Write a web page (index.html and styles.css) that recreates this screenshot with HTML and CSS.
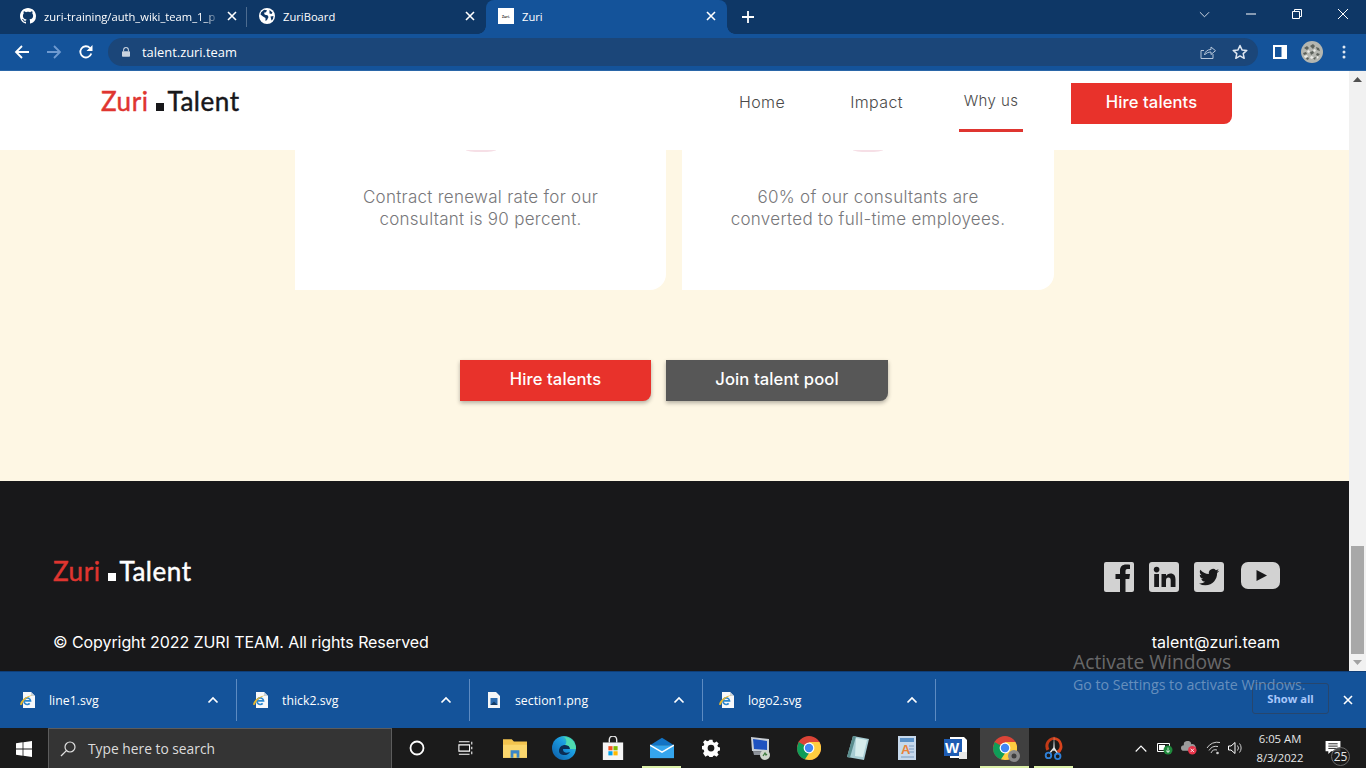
FILE: index.html
```html
<!DOCTYPE html>
<html lang="en">
<head>
<meta charset="utf-8">
<title>Zuri</title>
<link rel="stylesheet" href="styles.css">
</head>
<body>
<svg class="defs" width="0" height="0" aria-hidden="true">
  <defs>
    <symbol id="ie" viewBox="0 0 16 16">
      <path d="M3 0h8l4 4v12H3z" fill="#f7f8fa"/>
      <path d="M11 0l4 4h-4z" fill="#c9d3dc"/>
      <path d="M3.800 8.800h6.700a3.300 3.300 0 1 0-.8 2.600" fill="none" stroke="#2a86cf" stroke-width="1.700"/>
      <path d="M.2 13C-.5 9 6 4 13 3c-5.500 2-10 5.500-11 9.800z" fill="#e9b82c"/>
    </symbol>
    <symbol id="chevup" viewBox="0 0 12 8">
      <path d="M1.500 6.500L6 2l4.500 4.500" fill="none" stroke="#fff" stroke-width="1.700"/>
    </symbol>
    <symbol id="x" viewBox="0 0 10 10">
      <path d="M1 1l8 8M9 1l-8 8" stroke="#fff" stroke-width="1.600" fill="none"/>
    </symbol>
    <symbol id="chrome" viewBox="0 0 24 24">
      <circle cx="12" cy="12" r="12" fill="#db4437"/>
      <path d="M12 12L1.600 6 0 12a12 12 0 0 0 8 11.300L12 24z" fill="#0f9d58"/>
      <path d="M12 6h10.400A12 12 0 0 1 12 24l-4-.7 6-9z" fill="#ffcd40"/>
      <circle cx="12" cy="12" r="5.400" fill="#fff"/>
      <circle cx="12" cy="12" r="4.200" fill="#4285f4"/>
    </symbol>
  </defs>
</svg>

<div class="screen">
  <div class="tabstrip">
    <div class="tab tab-first">
      <svg class="fav" viewBox="0 0 16 16"><path fill="#fff" d="M8 0C3.580 0 0 3.580 0 8c0 3.540 2.290 6.530 5.470 7.590.4.070.55-.17.55-.38 0-.19-.01-.82-.01-1.490-2.010.37-2.530-.49-2.690-.94-.09-.23-.48-.94-.82-1.130-.28-.15-.68-.52-.01-.53.63-.01 1.080.58 1.230.82.720 1.210 1.870.87 2.330.66.070-.52.280-.87.510-1.070-1.780-.2-3.640-.89-3.640-3.950 0-.87.310-1.590.820-2.150-.08-.2-.36-1.020.080-2.120 0 0 .67-.21 2.200.82.640-.18 1.320-.27 2-.27.68 0 1.360.09 2 .27 1.530-1.040 2.200-.82 2.200-.82.44 1.100.16 1.920.080 2.120.51.56.82 1.270.82 2.150 0 3.070-1.870 3.750-3.650 3.950.29.25.54.73.54 1.480 0 1.070-.01 1.930-.01 2.200 0 .21.15.46.55.38A8.013 8.013 0 0016 8c0-4.420-3.580-8-8-8z"/></svg>
      <span class="tab-title tab-fade">zuri-training/auth_wiki_team_1_p</span>
      <svg class="tab-x"><use href="#x"/></svg>
    </div>
    <div class="tab tab-second">
      <svg class="fav" viewBox="0 0 16 16"><circle cx="8" cy="8" r="8" fill="#fff"/><path fill="#0e3766" d="M2 4.500l3-2.800 3 .5-1 2-2 .5.800 2 2.700.6 1 1.700-1.500 3-1.500 1V10L4 8.500 1.500 6.500zM10.500 2l3 2.500-1 1.500-2-.5zM11.500 8.500l3-.5-.5 3-1.500 1.500z"/></svg>
      <span class="tab-title">ZuriBoard</span>
      <svg class="tab-x"><use href="#x"/></svg>
    </div>
    <div class="tab tab-active">
      <span class="mini-fav">Zuri.</span>
      <span class="tab-title">Zuri</span>
      <svg class="tab-x"><use href="#x"/></svg>
    </div>
    <svg class="newtab" viewBox="0 0 12 12"><path d="M6 0v12M0 6h12" stroke="#fff" stroke-width="1.800"/></svg>
    <div class="winctrl">
      <svg class="wc wc-chev" viewBox="0 0 12 7"><path d="M1 1l5 5 5-5" fill="none" stroke="#dfe6ee" stroke-width="1"/></svg>
      <svg class="wc wc-min" viewBox="0 0 10 10"><path d="M0 5h10" stroke="#fff" stroke-width="1"/></svg>
      <svg class="wc wc-res" viewBox="0 0 10 10"><path d="M.5 2.500h7v7h-7zM2.500 2.500v-2h7v7h-2" fill="none" stroke="#fff" stroke-width="1"/></svg>
      <svg class="wc wc-close" viewBox="0 0 10 10"><path d="M0 0l10 10M10 0L0 10" stroke="#fff" stroke-width="1"/></svg>
    </div>
  </div>

  <div class="toolbar">
    <svg class="tool" viewBox="0 0 16 16"><path d="M15 8H2M8 2L2 8l6 6" fill="none" stroke="#fff" stroke-width="1.800"/></svg>
    <svg class="tool tool-fwd" viewBox="0 0 16 16"><path d="M1 8h13M8 2l6 6-6 6" fill="none" stroke="#6f9ad0" stroke-width="1.800"/></svg>
    <svg class="tool" viewBox="0 0 16 16"><path d="M13.300 9.500A5.600 5.600 0 1 1 12 4" fill="none" stroke="#fff" stroke-width="1.800"/><path d="M14.500 1v6h-6z" fill="#fff"/></svg>
    <div class="omnibox">
      <svg class="lock" viewBox="0 0 10 12"><path d="M2 5V3.500a3 3 0 0 1 6 0V5" fill="none" stroke="#c9d3df" stroke-width="1.300"/><rect y="5" width="10" height="7" rx="1" fill="#c9d3df"/></svg>
      <span class="url">talent.zuri.team</span>
      <svg class="omni-ic share" viewBox="0 0 16 16"><path d="M13 10v4.500H1V6.500h3" fill="none" stroke="#b6c6da" stroke-width="1"/><path d="M4.500 11c.5-3.500 3-5.500 6.500-5.500V3l4.500 3.700L11 10.500V8c-2.500 0-5 1-6.500 3z" fill="none" stroke="#b6c6da" stroke-width="1"/></svg>
      <svg class="omni-ic star" viewBox="0 0 16 16"><path d="M8 1.500l2 4.400 4.800.5-3.600 3.200 1 4.700L8 11.900l-4.200 2.400 1-4.700L1.200 6.400 6 5.900z" fill="none" stroke="#dfe7f1" stroke-width="1.500" stroke-linejoin="round"/></svg>
    </div>
    <svg class="panel" viewBox="0 0 14 14"><rect width="14" height="14" fill="#fff"/><rect x="2" y="2" width="6.500" height="10" fill="#14539a"/></svg>
    <svg class="avatar" viewBox="0 0 22 22">
      <circle cx="11" cy="11" r="11" fill="#b4b6b0"/>
      <path d="M3 7l3-2 2 2-2 2zM9 5l3-2 2 2-2 3zM15 6l3 1 1 3-3-1zM2 12l3-1 1 2-3 1zM9 11l3-1 1 2-3 2zM16 12l3 1-2 2-2-1zM6 16l2 1-1 2-2-1zM12 17l3-1-1 3z" fill="#5d625c"/>
      <path d="M6 10l2-1 1 2-2 1zM13 8l2 1-1 2-2-1zM3 15l3-1 1 2-3 1zM10 15l3 1-2 2-2-1zM16 15l2 1-2 2z" fill="#ecece8"/>
    </svg>
    <svg class="kebab" viewBox="0 0 4 14"><circle cx="2" cy="2" r="1.500" fill="#dfe7f1"/><circle cx="2" cy="7" r="1.500" fill="#dfe7f1"/><circle cx="2" cy="12" r="1.500" fill="#dfe7f1"/></svg>
  </div>

  <div class="viewport">
    <div class="page">
      <header class="site-head">
        <div class="logo logo-dark"><span class="logo-red">Zuri</span><i class="logo-sq"></i><span>Talent</span></div>
        <nav class="nav">
          <a class="nav-link nav-home">Home</a>
          <a class="nav-link nav-impact">Impact</a>
          <a class="nav-link nav-why">Why us</a>
          <a class="btn btn-head">Hire talents</a>
        </nav>
      </header>
      <section class="cream">
        <div class="cards">
          <article class="card"><i class="arc"></i><p>Contract renewal rate for our<br>consultant is 90 percent.</p></article>
          <article class="card"><i class="arc"></i><p>60% of our consultants are<br>converted to full-time employees.</p></article>
        </div>
        <div class="cta">
          <a class="btn btn-red">Hire talents</a>
          <a class="btn btn-grey">Join talent pool</a>
        </div>
      </section>
      <footer class="foot">
        <div class="foot-row foot-top">
          <div class="logo logo-light"><span class="logo-red">Zuri</span><i class="logo-sq"></i><span>Talent</span></div>
          <div class="social">
            <svg class="soc" viewBox="0 0 30 30"><rect width="30" height="30" rx="2" fill="#d2d2d2"/><path fill="#18181a" d="M16 30V17h-4.500v-5H16V8.500C16 4.500 18.500 2.500 22 2.500c1.500 0 3 .1 4 .3V7h-2.600C21.800 7 21.500 8 21.500 9.500V12H26l-.7 5h-3.800v13z"/></svg>
            <svg class="soc" viewBox="0 0 30 30"><rect width="30" height="30" rx="3" fill="#d2d2d2"/><circle cx="7.600" cy="7.600" r="2.800" fill="#18181a"/><rect x="5.200" y="12" width="4.800" height="13" fill="#18181a"/><path fill="#18181a" d="M12.500 12h4.500v2c.9-1.400 2.500-2.400 4.500-2.400 3.500 0 5 2.300 5 6V25h-4.800v-6.500c0-1.900-.6-3-2.200-3-1.700 0-2.500 1.200-2.500 3V25h-4.500z"/></svg>
            <svg class="soc" viewBox="0 0 30 30"><rect width="30" height="30" rx="3" fill="#d2d2d2"/><g transform="translate(5 5) scale(.84)"><path fill="#18181a" d="M23.953 4.570a10 10 0 01-2.825.775 4.958 4.958 0 002.163-2.723c-.951.555-2.005.959-3.127 1.184a4.920 4.920 0 00-8.384 4.482C7.690 8.095 4.067 6.130 1.640 3.162a4.822 4.822 0 00-.666 2.475c0 1.710.870 3.213 2.188 4.096a4.904 4.904 0 01-2.228-.616v.060a4.923 4.923 0 003.946 4.827 4.996 4.996 0 01-2.212.085 4.936 4.936 0 004.604 3.417 9.867 9.867 0 01-6.102 2.105c-.390 0-.779-.023-1.170-.067a13.995 13.995 0 007.557 2.209c9.053 0 13.998-7.496 13.998-13.985 0-.210 0-.420-.015-.630A9.935 9.935 0 0024 4.590z"/></g></svg>
            <svg class="soc soc-yt" viewBox="0 0 39 27"><rect width="39" height="27" rx="7" fill="#d2d2d2"/><path d="M15.500 8l10.500 5.500-10.500 5.500z" fill="#18181a"/></svg>
          </div>
        </div>
        <div class="foot-row foot-bottom">
          <span class="copyright">© Copyright 2022 ZURI TEAM. All rights Reserved</span>
          <span>talent@zuri.team</span>
        </div>
      </footer>
    </div>
    <div class="scrollbar">
      <svg class="sb-arrow" viewBox="0 0 9 5"><path d="M4.500 0l4.500 5H0z" fill="#505050"/></svg>
      <div class="sb-track"><div class="sb-thumb"></div></div>
      <svg class="sb-arrow" viewBox="0 0 9 5"><path d="M0 0h9L4.500 5z" fill="#a3a3a3"/></svg>
    </div>
  </div>

  <div class="downloads">
    <div class="dl"><svg class="dl-ic"><use href="#ie"/></svg><span class="dl-name">line1.svg</span><svg class="dl-chev"><use href="#chevup"/></svg></div>
    <div class="dl"><svg class="dl-ic"><use href="#ie"/></svg><span class="dl-name">thick2.svg</span><svg class="dl-chev"><use href="#chevup"/></svg></div>
    <div class="dl"><svg class="dl-ic" viewBox="0 0 16 16"><path d="M2 0h8l4 4v12H2z" fill="#f4f6f8"/><rect x="4.500" y="6" width="7" height="7" fill="#2c6cb0"/><path d="M4.500 13l3.500-3.500 3.500 3.500z" fill="#143c66"/></svg><span class="dl-name">section1.png</span><svg class="dl-chev"><use href="#chevup"/></svg></div>
    <div class="dl"><svg class="dl-ic"><use href="#ie"/></svg><span class="dl-name">logo2.svg</span><svg class="dl-chev"><use href="#chevup"/></svg></div>
    <div class="dl-end">
      <a class="showall">Show all</a>
      <svg class="dl-close"><use href="#x"/></svg>
    </div>
  </div>

  <div class="taskbar">
    <svg class="win" viewBox="0 0 16 16"><path fill="#fff" d="M0 2.200l6.600-.9v6.300H0zM7.400 1.200L16 0v7.600H7.400zM0 8.400h6.600v6.300L0 13.800zM7.400 8.400H16V16l-8.600-1.200z"/></svg>
    <div class="search">
      <svg class="search-ic" viewBox="0 0 16 16"><circle cx="10" cy="6" r="5" fill="none" stroke="#e0e0e0" stroke-width="1.200"/><path d="M6.400 9.600L1 15" stroke="#e0e0e0" stroke-width="1.300"/></svg>
      <span>Type here to search</span>
    </div>
    <div class="tb"><svg class="ti" viewBox="0 0 16 16"><circle cx="8" cy="8" r="6.500" fill="none" stroke="#fff" stroke-width="1.800"/></svg></div>
    <div class="tb"><svg class="ti" viewBox="0 0 18 16"><path d="M1 1h12M1 15h12M1 4.500h12v7H1zM15.500 1v3M15.500 6.500v3M15.500 12v3" fill="none" stroke="#fff" stroke-width="1.200"/></svg></div>
    <div class="tb"><svg class="ti ti-lg" viewBox="0 0 22 18"><path d="M0 1h8l2 2h12v15H0z" fill="#f3c44f"/><path d="M0 6h22v12H0z" fill="#fbd76d"/><path d="M7 11h8v7h-2.500v-4h-3v4H7z" fill="#3a86c8"/></svg></div>
    <div class="tb"><svg class="ti ti-lg" viewBox="0 0 24 24"><defs><linearGradient id="edge" x1="0" y1="1" x2="1" y2="0"><stop offset="0" stop-color="#0c59a4"/><stop offset=".6" stop-color="#1b9de2"/><stop offset="1" stop-color="#50e6a0"/></linearGradient></defs><circle cx="12" cy="12" r="12" fill="url(#edge)"/><path d="M7 15c0-4 3-6 6-6 3 0 5 1.500 5 4h-7c-.5 3 3 5 7 3-2 4.500-11 4-11-1z" fill="#0b2d55"/><path d="M13 9c3 0 5 1.500 5 4h6c0-6-5-12-12-12 3 2 3 6 1 8z" fill="#4fdcb0"/></svg></div>
    <div class="tb"><svg class="ti ti-lg" viewBox="0 0 24 26"><path d="M8 7V4a4 4 0 0 1 8 0v3" fill="none" stroke="#e8e8e8" stroke-width="1.500"/><path d="M1 7h22v19H1z" fill="#f5f5f5"/><rect x="7" y="11" width="4.500" height="4.500" fill="#f25022"/><rect x="12.500" y="11" width="4.500" height="4.500" fill="#7fba00"/><rect x="7" y="16.500" width="4.500" height="4.500" fill="#00a4ef"/><rect x="12.500" y="16.500" width="4.500" height="4.500" fill="#ffb900"/></svg></div>
    <div class="tb tb-run"><svg class="ti ti-lg" viewBox="0 0 26 22"><path d="M13 0l13 8H0z" fill="#1273c4"/><path d="M0 8h26v14H0z" fill="#35a6ee"/><path d="M0 8l13 7.500L26 8" fill="none" stroke="#fff" stroke-width="1.600"/></svg></div>
    <div class="tb"><svg class="ti ti-gear" viewBox="0 0 24 24"><path fill="#fff" fill-rule="evenodd" d="M10 1h4l.6 3 2.200.9 2.600-1.700 2.800 2.800-1.700 2.600.9 2.200 3 .6v4l-3 .6-.9 2.200 1.700 2.600-2.800 2.800-2.600-1.700-2.200.9-.6 3h-4l-.6-3-2.200-.9-2.600 1.700L1.400 19l1.700-2.600-.9-2.200-3-.6v-4l3-.6.9-2.200L1.400 4.200 4.200 1.400l2.600 1.700L9 2.200zM12 7.500a4.500 4.500 0 1 0 0 9 4.500 4.500 0 0 0 0-9z"/></svg></div>
    <div class="tb"><svg class="ti ti-lg" viewBox="0 0 24 24"><path d="M3 1l18 2v13L4 15z" fill="#c9cfd6"/><path d="M5 3l14 2v9L6 13z" fill="#1e52c0"/><path d="M5 15l13 1v3H6z" fill="#8d929a"/><circle cx="17" cy="19" r="5" fill="#cfd5cc"/><path d="M15 20l2-3 1 2 1-1" stroke="#3d7a3d" stroke-width="1.200" fill="none"/></svg></div>
    <div class="tb"><svg class="ti ti-lg"><use href="#chrome"/></svg></div>
    <div class="tb"><svg class="ti ti-lg" viewBox="0 0 22 24"><path d="M6 0l16 3-5 21L0 21z" fill="#a7ccd3"/><path d="M6 0l3 .6L3 21.500 0 21z" fill="#5a8d8e"/><path d="M9 2l11 2-4 17-8-1z" fill="#d6ecec"/></svg></div>
    <div class="tb"><svg class="ti ti-lg" viewBox="0 0 20 24"><path d="M1 0h18v24H1z" fill="#c7d9ec"/><rect x="3" y="2" width="14" height="4" fill="#5c92c8"/><text class="ti-a" x="4" y="18">A</text><path d="M12 10h5M12 13h5M12 16h5M4 21h13" stroke="#7a9cc0" stroke-width="1"/></svg></div>
    <div class="tb"><svg class="ti ti-lg" viewBox="0 0 24 24"><path d="M6 1h14l3 3v18H6z" fill="#fff"/><rect y="3" width="18" height="17" fill="#1e5cb3"/><text class="ti-w" x="1" y="17">W</text><path d="M15 16h8v7h-8z" fill="#e8e8e8"/></svg></div>
    <div class="tb tb-active"><svg class="ti ti-lg"><use href="#chrome"/></svg><svg class="ti-over" viewBox="0 0 12 12"><circle cx="6" cy="6" r="6" fill="#8a8a8a"/><circle cx="6" cy="6" r="2.500" fill="#3e3e3e"/></svg></div>
    <div class="tb tb-run tb-split"><svg class="ti ti-lg" viewBox="0 0 22 26"><path d="M11 1a10 10 0 0 1 5 18l-2-3a6.500 6.500 0 0 0-3-12z" fill="#d8431c"/><path d="M11 1a10 10 0 0 0-8 15l3-2a6.500 6.500 0 0 1 5-10z" fill="#c33a17"/><path d="M11 0l1 16h-2z" fill="#dfe3e6"/><path d="M11 13l-5 6M11 13l4 6" stroke="#e6e6e6" stroke-width="1.500"/><circle cx="5" cy="21" r="3" fill="none" stroke="#2f80d8" stroke-width="2"/><circle cx="15" cy="22" r="3" fill="none" stroke="#2f80d8" stroke-width="2"/></svg></div>
    <div class="tray">
      <svg class="tr tr-chev" viewBox="0 0 12 7"><path d="M.7 6.500L6 1l5.300 5.500" fill="none" stroke="#fff" stroke-width="1.100"/></svg>
      <svg class="tr tr-bat" viewBox="0 0 16 14"><path d="M.5 2.500h12v8H.5z" fill="none" stroke="#fff"/><rect x="2" y="4" width="6" height="5" fill="#fff"/><circle cx="11" cy="9" r="4.500" fill="#1f8a3c"/><path d="M11 6.500v5M9.500 9.500a1.500 1.500 0 0 0 3 0" stroke="#fff" fill="none" stroke-width=".8"/></svg>
      <svg class="tr tr-cloud" viewBox="0 0 17 14"><path d="M3 10a3 3 0 0 1 0-6 4 4 0 0 1 8-1 3.500 3.500 0 0 1 2 7z" fill="#9c9c9c"/><circle cx="12" cy="9.500" r="4.500" fill="#e8344a"/><path d="M10.200 7.700l3.600 3.600M13.800 7.700l-3.600 3.600" stroke="#fff" stroke-width=".9"/></svg>
      <svg class="tr tr-wifi" viewBox="0 0 15 14"><path d="M1 7a12 12 0 0 1 13-5.500M3 9.500a8.500 8.500 0 0 1 9-4M5 12a5 5 0 0 1 6-3" fill="none" stroke="#cfcfcf" stroke-width="1"/><circle cx="11.500" cy="12" r="1.300" fill="#cfcfcf"/></svg>
      <svg class="tr tr-vol" viewBox="0 0 16 14"><path d="M.5 5v4h2.500l4 3.500v-11L3 5z" fill="none" stroke="#fff"/><path d="M9.500 4.500a4 4 0 0 1 0 5M11.500 2.500a7 7 0 0 1 0 9" fill="none" stroke="#cfcfcf"/></svg>
      <div class="clock"><span>6:05 AM</span><span>8/3/2022</span></div>
      <div class="notif">
        <svg class="notif-ic" viewBox="0 0 16 14"><path d="M0 0h16v11H6l-3 3v-3H0z" fill="#fff"/><path d="M3 3h10M3 5.500h10M3 8h10" stroke="#1b1b1b"/></svg>
        <span class="notif-n">25</span>
      </div>
    </div>
  </div>

  <div class="activate">
    <div class="act-1">Activate Windows</div>
    <div class="act-2">Go to Settings to activate Windows.</div>
  </div>
</div>
</body>
</html>
```
FILE: styles.css
```css
* { box-sizing: border-box; }
html, body { margin: 0; padding: 0; height: 100%; overflow: hidden; }
body { font-family: "Open Sans", "Liberation Sans", sans-serif; background: #000; }
.defs { position: absolute; }
svg { display: block; flex: none; }
p { margin: 0; }

.screen { position: relative; width: 1366px; height: 768px; display: flex; flex-direction: column; }

/* Tab strip */
.tabstrip { height: 34px; background: #0e3766; display: flex; align-items: stretch; color: #fff; flex: none; }
.tab { width: 239px; display: flex; align-items: center; padding: 0 10px 2px 20px; font-size: 11.200px; gap: 8px; position: relative; }
.tab-first { width: 247px; padding-right: 10px; }
.tab-first::after { content: ""; position: absolute; right: 0; top: 7px; height: 20px; width: 1px; background: #4d6c90; }
.tab-first .tab-x { margin-right: 0; }
.tab-second { padding-left: 12px; }
.tab-second .tab-title { margin-left: 0; }
.tab-active { width: 241px; background: #14539a; border-radius: 8px 8px 0 0; padding-left: 12px; }
.tab-active::before, .tab-active::after { content: ""; position: absolute; bottom: 0; width: 8px; height: 8px; }
.tab-active::before { left: -8px; background: radial-gradient(circle at 0 0, transparent 7.500px, #14539a 8px); }
.tab-active::after { right: -8px; background: radial-gradient(circle at 100% 0, transparent 7.500px, #14539a 8px); }
.fav { width: 16px; height: 16px; }
.mini-fav { width: 16px; height: 16px; background: #fff; color: #333; font-size: 3.500px; font-weight: 700; display: flex; align-items: center; justify-content: center; }
.tab-title { flex: 1; white-space: nowrap; overflow: hidden; min-width: 0; }
.tab-fade { -webkit-mask-image: linear-gradient(90deg, #000 92%, transparent); mask-image: linear-gradient(90deg, #000 92%, transparent); }
.tab-x { width: 10px; height: 10px; margin-right: 1px; }
.newtab { width: 12px; height: 12px; margin: 11px 0 0 15px; }
.winctrl { margin-left: auto; display: flex; align-items: center; height: 28px; }
.wc { width: 10px; height: 10px; margin-left: 36px; }
.wc-chev { width: 11px; height: 7px; margin: 0; }
.wc-close { margin-right: 18px; }

/* Toolbar */
.toolbar { height: 37px; background: #14539a; border-bottom: 1px solid #2a66a8; display: flex; align-items: center; flex: none; padding: 0 0 1px 14px; }
.tool { width: 16px; height: 16px; margin-right: 16px; }
.omnibox { width: 1150px; height: 28px; margin-left: -2px; border-radius: 14px; background: #1b4679; display: flex; align-items: center; padding: 0 10px 0 14px; color: #fff; font-size: 12.900px; }
.lock { width: 8px; height: 10px; margin-right: 12px; }
.url { flex: 1; }
.omni-ic { width: 16px; height: 16px; }
.star { margin-left: 16px; }
.panel { width: 14px; height: 14px; margin-left: 15px; }
.avatar { width: 22px; height: 22px; margin-left: 14px; }
.kebab { width: 4px; height: 14px; margin-left: 19px; }

/* Page viewport */
.viewport { flex: 1; min-height: 0; display: flex; }
.page { flex: 1; min-width: 0; display: flex; flex-direction: column; background: #fff; }
.site-head { height: 79px; flex: none; background: #fff; display: flex; justify-content: space-between; align-items: flex-start; padding: 12px 117px 0 101px; }
.logo { display: flex; align-items: baseline; font-family: "Lato", sans-serif; font-weight: 400; -webkit-text-stroke: .45px currentColor; font-size: 26px; line-height: 30px; letter-spacing: .55px; }
.logo-dark { color: #17171a; margin-top: 3px; }
.logo-light { color: #fff; }
.logo-red { color: #df3530; }
.logo-sq { width: 8px; height: 8px; background: currentColor; margin: 0 3px 0 8px; }

.nav { display: flex; align-items: flex-start; font-family: "Inter", sans-serif; }
.nav-link { font-size: 16px; line-height: 20px; color: #4a4a4a; font-weight: 300; letter-spacing: .4px; display: block; }
.nav-home { margin-top: 9px; }
.nav-impact { margin: 9px 0 0 65px; }
.nav-why { font-size: 15px; margin-left: 56px; width: 64px; padding: 8px 0 18px; text-align: center; border-bottom: 3px solid #df3530; }
.btn { display: flex; align-items: center; justify-content: center; font-family: "Inter", sans-serif; color: #fff; font-weight: 450; letter-spacing: .1px; border-radius: 0 0 8px 0; height: 41px; padding-bottom: 3px; font-size: 16.600px; }
.btn-head { width: 161px; background: #e8322b; margin-left: 48px; }
.cream { height: 331px; flex: none; background: #fef7e4; display: flex; flex-direction: column; align-items: center; }
.cards { display: grid; grid-template-columns: 371px 372px; gap: 16px; }
.card { height: 140px; background: #fff; border-radius: 0 0 16px 0; text-align: center; color: #77777a; font-family: "Inter", sans-serif; font-size: 17px; letter-spacing: .28px; font-weight: 300; line-height: 22px; }
.arc { display: block; width: 30px; height: 2px; margin: 0 auto 34px; background: #f6dfe6; border-radius: 0 0 15px 15px / 0 0 2px 2px; }
.cta { display: flex; gap: 15px; margin-top: 70px; padding-right: 1px; }
.btn-red { width: 191px; background: #e8322b; box-shadow: 0 2px 4px rgba(0,0,0,.3); }
.btn-grey { width: 222px; background: #575757; box-shadow: 0 2px 4px rgba(0,0,0,.3); }

.foot { flex: 1; min-height: 0; background: #18181a; color: #fff; padding: 75px 69px 0 53px; font-family: "Inter", sans-serif; font-size: 16px; font-weight: 400; }
.foot-row { display: flex; justify-content: space-between; }
.foot-top { align-items: flex-start; }
.foot-bottom { margin-top: 40px; line-height: 20px; }
.copyright { letter-spacing: -.08px; }
.social { display: flex; align-items: flex-start; gap: 15px; margin-top: 6px; }
.soc { width: 30px; height: 30px; }
.soc-yt { width: 39px; height: 27px; margin-left: 2px; }

/* Scrollbar */
.scrollbar { width: 17px; flex: none; background: #f1f1f1; display: flex; flex-direction: column; align-items: center; padding: 6px 0; }
.sb-arrow { width: 9px; height: 5px; }
.sb-track { flex: 1; width: 100%; position: relative; }
.sb-thumb { position: absolute; left: 2px; right: 2px; bottom: 6px; height: 108px; background: #a8a8a8; }

/* Downloads */
.downloads { height: 57px; flex: none; background: #14539a; border-top: 1px solid #0f3e78; display: flex; align-items: center; color: #fff; font-size: 12.300px; }
.dl { width: 233px; height: 42px; display: flex; align-items: center; border-right: 1px solid #5d8bc2; padding: 0 17px 0 16px; }
.dl:first-child { width: 237px; padding-left: 20px; }
.dl-ic { width: 16px; height: 16px; }
.dl-name { flex: 1; margin-left: 13px; }
.dl-chev { width: 12px; height: 8px; }
.dl-end { flex: 1; display: flex; align-items: center; justify-content: flex-end; padding-right: 13px; }
.showall { width: 77px; height: 31px; border: 1px solid #27466d; border-radius: 3px; display: flex; align-items: center; justify-content: center; font-weight: 700; font-size: 11.200px; color: #a8c7fa; margin-right: 14px; margin-top: -3px; }
.dl-close { width: 10px; height: 10px; }

/* Taskbar */
.taskbar { height: 40px; flex: none; background: #1b1b1b; display: flex; align-items: stretch; }
.win { width: 16px; height: 16px; margin: 13px 16px 0 16px; }
.search { width: 344px; background: #343434; border: 1px solid #5c5c5c; border-bottom: 0; display: flex; align-items: center; color: #dcdcdc; font-size: 13.800px; padding-left: 11px; gap: 12px; }
.search-ic { width: 16px; height: 16px; }
.tb { width: 49px; display: flex; align-items: center; justify-content: center; position: relative; }
.ti { width: 16px; height: 16px; }
.ti-lg { width: 24px; height: 24px; }
.ti-gear { width: 18px; height: 18px; }
.tb-run::after, .tb-active::after { content: ""; position: absolute; bottom: 0; left: 5px; right: 5px; height: 2px; background: #dcf0a8; }
.tb-active { background: #404040; }
.tb-active::after { left: 0; right: 0; }
.ti-over { position: absolute; width: 12px; height: 12px; left: 28px; top: 22px; }
.ti-a { font: 700 13px "Liberation Sans", sans-serif; fill: #e8833a; }
.ti-w { font: 700 15px "Liberation Sans", sans-serif; fill: #fff; }
.tray { flex: 1; display: flex; align-items: center; color: #fff; padding-left: 57px; position: relative; }
.tr { width: 16px; height: 14px; }
.tr-chev { width: 12px; height: 7px; margin-right: 10px; }
.tr-cloud { margin-left: 8px; }
.tr-wifi { margin-left: 9px; width: 15px; }
.tr-vol { margin-left: 7px; }
.clock { display: flex; flex-direction: column; align-items: center; font-size: 11.300px; line-height: 19px; margin-left: 6px; width: 60px; color: #e6e6e6; }
.notif { position: relative; width: 28px; height: 28px; margin-left: 15px; }
.notif-ic { width: 16px; height: 13px; position: absolute; left: 0; top: 7px; }
.notif-n { position: absolute; left: 6px; top: 13px; width: 19px; height: 19px; border: 1px solid #6a6a6a; border-radius: 50%; background: rgba(27,27,27,.8); font-size: 12px; line-height: 17px; text-align: center; color: #e6e6e6; }

/* Watermark */
.activate { position: absolute; left: 1073px; top: 649px; color: rgba(255,255,255,.36); font-family: "Open Sans", sans-serif; pointer-events: none; }
.act-1 { font-size: 19.300px; line-height: 25px; }
.act-2 { font-size: 14.200px; line-height: 20px; margin-top: 1px; }
```
